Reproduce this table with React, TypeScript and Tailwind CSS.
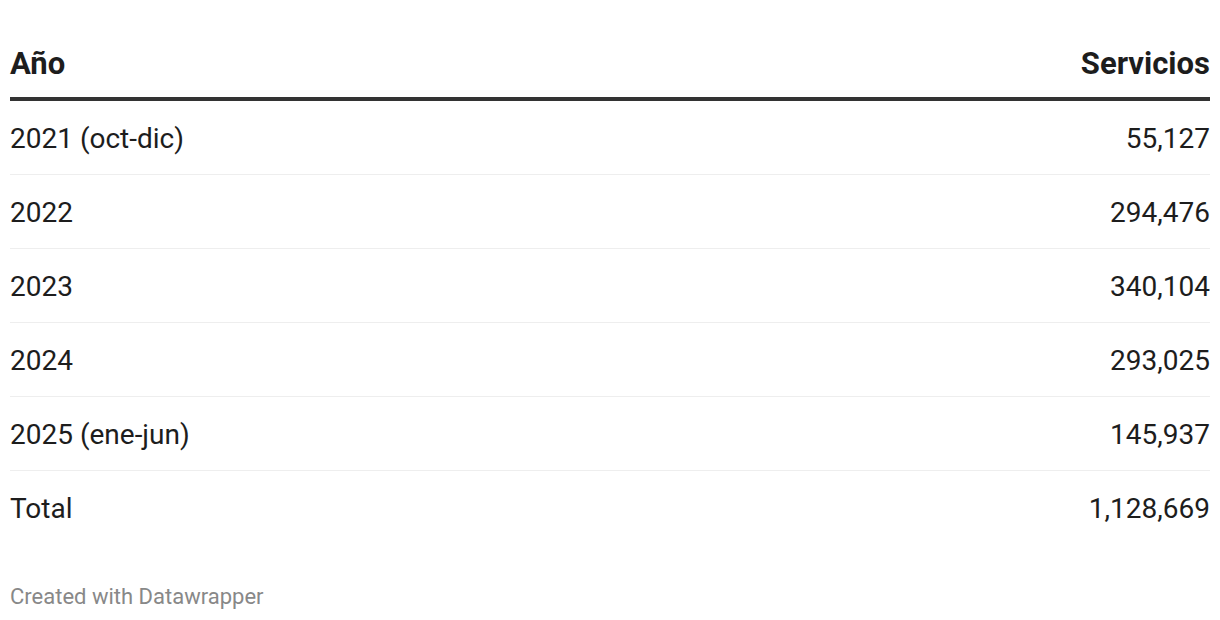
const rows = [
  { year: "2021 (oct-dic)", value: "55,127" },
  { year: "2022", value: "294,476" },
  { year: "2023", value: "340,104" },
  { year: "2024", value: "293,025" },
  { year: "2025 (ene-jun)", value: "145,937" },
  { year: "Total", value: "1,128,669" },
];

export default function App() {
  return (
    <div className="w-[1220px] h-[620px] bg-white px-[10px] pt-[45px] font-['Roboto',sans-serif] text-[#1d1d1d]">
      <div className="flex justify-between border-b-4 border-[#333333] pb-[14px] text-[31px] leading-[38px] font-bold">
        <span>Año</span>
        <span>Servicios</span>
      </div>
      {rows.map((r, i) => (
        <div
          key={r.year}
          className={
            "flex h-[74px] items-center justify-between pt-[2px] text-[28px] " +
            (i < rows.length - 1 ? "border-b border-[#eeeeee]" : "")
          }
        >
          <span>{r.year}</span>
          <span>{r.value}</span>
        </div>
      ))}
      <div className="mt-[39px] text-[22px] leading-[26px] text-[#888888]">Created with Datawrapper</div>
    </div>
  );
}
